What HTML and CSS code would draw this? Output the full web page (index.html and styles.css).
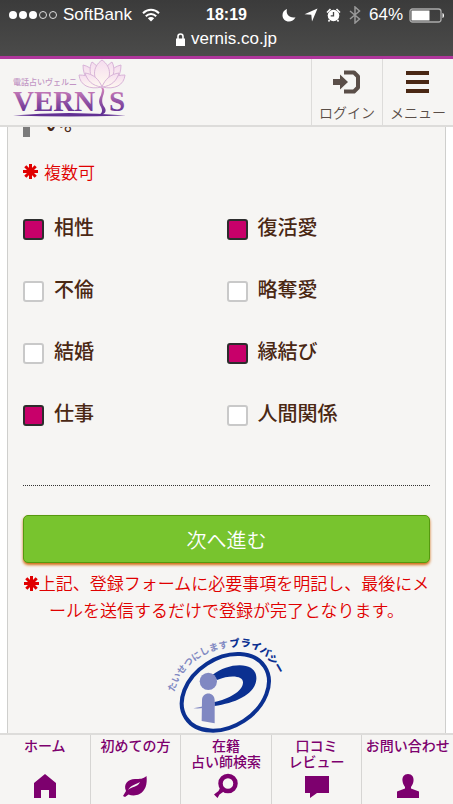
FILE: index.html
```html
<!DOCTYPE html>
<html lang="ja">
<head>
<meta charset="utf-8">
<meta name="viewport" content="width=device-width, initial-scale=1">
<title>VERNIS</title>
<link rel="stylesheet" href="styles.css">
</head>
<body>
<div class="browser-bar">
  <div class="status">
    <div class="status-left">
      <svg width="49" height="10" viewBox="0 0 49 10" fill="#fff"><circle cx="5" cy="5" r="4"/><circle cx="15" cy="5" r="4"/><circle cx="25" cy="5" r="4"/><g fill="none" stroke="#ddd"><circle cx="35" cy="5" r="3.5"/><circle cx="45" cy="5" r="3.5"/></g></svg>
      <span>SoftBank</span>
      <svg class="wifi" width="18" height="14" viewBox="0 0 18 14" fill="none" stroke="#fff" stroke-width="2"><path d="M1 5.2C5.6.6 12.4.6 17 5.2M3.8 8.200c3-3 7.400-3 10.400 0"/><path d="M9 13.500 5.800 10.300c1.800-1.700 4.600-1.700 6.400 0z" fill="#fff" stroke="none"/></svg>
    </div>
    <span class="time">18:19</span>
    <div class="status-right">
      <svg width="14" height="14" viewBox="0 0 14 14"><path d="M5 1C3.500 6 7.500 10.500 13.500 9.300 12 12.300 9.600 13.500 7 13.500 3.200 13.500.5 10.700.5 7.200.5 4.200 2.300 1.800 5 1z" fill="#fff"/></svg>
      <svg width="14" height="14" viewBox="0 0 14 14"><path d="M13.500.5 8 13.500 7.300 6.800.5 6.300z" fill="#fff"/></svg>
      <svg width="15" height="14" viewBox="0 0 15 14"><circle cx="7.500" cy="7.500" r="5.800" fill="#fff"/><path d="M1 4.500 4.500 1M14 4.500 10.500 1M3.500 12 2.500 13.500M11.500 12l1 1.500" stroke="#fff" stroke-width="1.600"/><path d="M7.500 4v3.800H4.700" fill="none" stroke="#444" stroke-width="1.300"/></svg>
      <svg width="12" height="18" viewBox="0 0 12 18"><path d="M1 5l9.500 8L6 17V1l4.500 4L1 13" fill="none" stroke="#999" stroke-width="1.500"/></svg>
      <span>64%</span>
      <svg width="36" height="15" viewBox="0 0 36 15"><rect x="1" y="1" width="31" height="13" rx="2.500" fill="none" stroke="#aaa" stroke-width="1.300"/><path d="M2.500 2.500h18v10h-18z" fill="#fff"/><path d="M33.500 5c2 .5 2 4.500 0 5z" fill="#fff"/></svg>
    </div>
  </div>
  <div class="address">
    <svg width="9" height="13" viewBox="0 0 9 13"><path d="M0 5.500h9V13H0z" fill="#fff"/><path d="M2 6V3.500c0-3.300 5-3.300 5 0V6" fill="none" stroke="#fff" stroke-width="1.600"/></svg>
    <span>vernis.co.jp</span>
  </div>
</div>

<header class="site-header">
  <a class="logo" href="#" aria-label="VERNIS">
    <svg width="116" height="60" viewBox="0 0 116 60">
      <defs>
        <linearGradient id="brand" x1="0" y1="30" x2="0" y2="54" gradientUnits="userSpaceOnUse"><stop offset="0" stop-color="#cf82bb"/><stop offset=".5" stop-color="#9656a6"/><stop offset="1" stop-color="#613093"/></linearGradient>
        <linearGradient id="petal" x1="0" y1="0" x2="0" y2="1"><stop offset="0" stop-color="#f5dcef"/><stop offset="1" stop-color="#fffaf0"/></linearGradient>
      </defs>
      <text class="logo-kana" x="0" y="26">電話占いヴェルニ</text>
      <g fill="url(#brand)">
        <text class="logo-name" x="0" y="52">VERN</text>
        <text class="logo-name" x="96" y="52">S</text>
        <path d="M87 28c5 0 5 4 3 9-2 6 0 9 2 12 2 4-1 7-6 7 3-2 4-4 2-8-3-5-2-8 0-12 1-4 2-6-1-8z"/>
        <path d="M0 56.500Q55 51.500 113 56.500 55 58.500 0 56.500z"/>
      </g>
      <g fill="url(#petal)" stroke="#d8b4d8" stroke-width="1">
        <path d="M87 28C76 27 70 17 70 6c9 2 16 10 18 20zM91 28c11-1 17-11 17-22-9 2-16 10-18 20z"/>
        <path d="M88 28C77 23 75 10 79 3c7 4 11 14 10 24zM90 28c11-5 13-18 9-25-7 4-11 14-10 24z"/>
        <path d="M89 28C79 20 79 8 89 1c10 7 10 19 0 27z"/>
        <path d="M89 28C76 31 67 26 66 16c10 0 19 4 23 12zM89 28c13 3 22-2 23-12-10 0-19 4-23 12z"/>
        <path d="M89 28c-10-1-15-7-17-14 8 1 14 6 17 14zM89 28c10-1 15-7 17-14-8 1-14 6-17 14z"/>
      </g>
    </svg>
  </a>
  <a class="header-link" href="#">
    <svg width="30" height="24" viewBox="0 0 30 24"><path d="M12 2.500h10l4 4v11l-4 4H12" fill="none" stroke="#5a4e48" stroke-width="4" stroke-linejoin="round"/><path d="M1 9h7V4.500l8 7.500-8 7.500V15H1z" fill="#5a4e48"/></svg>
    <span>ログイン</span>
  </a>
  <button class="header-link" type="button">
    <svg width="24" height="24" viewBox="0 0 24 24" fill="#4a2814"><path d="M0 1h23v4H0zM0 10h23v4H0zM0 19h23v4H0z"/></svg>
    <span>メニュー</span>
  </button>
</header>

<main class="page">
  <form class="panel">
    <h2 class="question">い。</h2>
    <p class="hint"><svg class="mark" width="15" height="15" viewBox="0 0 15 15"><path d="M7.500 0v15M0 7.500h15M2.300 2.300l10.400 10.400M12.700 2.300 2.300 12.700"/></svg>複数可</p>
    <div class="choices">
      <label class="choice"><input type="checkbox" checked><span>相性</span></label>
      <label class="choice"><input type="checkbox" checked><span>復活愛</span></label>
      <label class="choice"><input type="checkbox"><span>不倫</span></label>
      <label class="choice"><input type="checkbox"><span>略奪愛</span></label>
      <label class="choice"><input type="checkbox"><span>結婚</span></label>
      <label class="choice"><input type="checkbox" checked><span>縁結び</span></label>
      <label class="choice"><input type="checkbox" checked><span>仕事</span></label>
      <label class="choice"><input type="checkbox"><span>人間関係</span></label>
    </div>
    <hr class="divider">
    <button class="submit" type="button">次へ進む</button>
    <p class="note"><svg class="mark" width="15" height="15" viewBox="0 0 15 15"><path d="M7.500 0v15M0 7.500h15M2.300 2.300l10.400 10.400M12.700 2.300 2.300 12.700"/></svg>上記、登録フォームに必要事項を明記し、最後にメールを送信するだけで登録が完了となります。</p>
    <svg class="privacy" width="116" height="104" viewBox="40 20 348 312">
      <defs>
        <path id="arc-a" d="M56 204C72 136 138 76 222 70"/>
        <path id="arc-b" d="M224 70C290 54 342 88 376 168"/>
      </defs>
      <ellipse cx="209" cy="204" rx="141" ry="102" transform="rotate(-33 209 204)" fill="none" stroke="#0b3091" stroke-width="12"/>
      <path d="M170 152C195 133 225 123 252 123c34 0 52 17 50 42-3 45-62 71-126 80v-12c42-9 85-32 86-58 1-20-36-25-78-8z" fill="#0b3091"/>
      <path d="M113 252q33-4 64-16v10q-32 8-64 6z" fill="#8088c2"/>
      <circle cx="158" cy="171" r="26" fill="#8088c2"/>
      <path d="M139 228c0-27 38-27 38 0v69l-39-7z" fill="#8088c2"/>
      <text class="arc-light"><textPath href="#arc-a">たいせつにします</textPath></text>
      <text class="arc-dark"><textPath href="#arc-b">プライバシー</textPath></text>
    </svg>
  </form>
</main>

<nav class="tabs">
  <a href="#"><span>ホーム</span><svg width="26" height="26" viewBox="0 0 26 26"><path d="M13 1l11 9v15h-7v-8H9v8H2V10z"/></svg></a>
  <a href="#"><span>初めての方</span><svg width="26" height="26" viewBox="0 0 26 26"><path d="M24.500 3c1 8-1 15-7 18-4 2-8 1.500-11 .5L3 24l-2-1 3-5C1 11 6 6 13 6c5 0 8 0 11.500-3z"/><path d="M6 17c3-5 7-5 12-8-3 6-8 4-12 8z" fill="#f6f5f3"/></svg></a>
  <a href="#"><span>在籍<br>占い師検索</span><svg width="26" height="26" viewBox="0 0 26 26"><circle cx="15" cy="10.500" r="7.500" fill="none" stroke="#7d006e" stroke-width="4.500"/><path d="M7.500 14l4 4-5 3.500L4.500 25 1 21.500 5.500 18z"/></svg></a>
  <a href="#"><span>口コミ<br>レビュー</span><svg width="26" height="26" viewBox="0 0 26 26"><path d="M1 3h24v17H13l-7 5v-5H1z"/></svg></a>
  <a href="#"><span>お問い合わせ</span><svg width="26" height="26" viewBox="0 0 26 26"><path d="M13 1c4 0 6 3 5.500 7-.4 3-1.500 4.500-2.500 6v1.500l8 3V25H2v-6.500l8-3V14C9 12.500 7.900 11 7.500 8 7 4 9 1 13 1z"/></svg></a>
</nav>
</body>
</html>
```

FILE: styles.css
```css
* {
  box-sizing: border-box;
}

body {
  margin: 0;
  height: 100vh;
  display: flex;
  flex-direction: column;
  background: #fff;
  color: #4a2814;
  font-family: "Noto Sans CJK JP", sans-serif;
}

svg {
  flex: none;
}

a {
  color: inherit;
  text-decoration: none;
}

/* Browser chrome */
.browser-bar {
  flex: none;
  padding: 5px 8px 6px;
  border-bottom: 3px solid #b0369c;
  background: linear-gradient(#3b3b3b, #4b4b4a);
  color: #fff;
  font: 17px/20px "Liberation Sans", sans-serif;
}

.status {
  display: grid;
  grid-template-columns: 1fr auto 1fr;
  align-items: center;
  height: 20px;
}

.status-left {
  display: flex;
  align-items: center;
  gap: 6px;
}

.wifi {
  margin-left: 4px;
}

.time {
  font-size: 16px;
  font-weight: bold;
}

.status-right {
  display: flex;
  align-items: center;
  justify-content: flex-end;
  gap: 8px;
}

.status-right span {
  margin-right: -2px;
}

.address {
  display: flex;
  align-items: center;
  justify-content: center;
  gap: 6px;
  margin-top: 4px;
  padding-bottom: 1px;
}

/* Site header */
.site-header {
  flex: none;
  display: flex;
  height: 68px;
  border-bottom: 2px solid #dddcda;
  background: #f6f5f3;
}

.logo {
  flex: 1;
  padding-left: 13px;
}

.logo svg {
  display: block;
}

.logo-kana {
  fill: #c295c4;
  font-size: 8px;
  font-weight: 500;
}

.logo-name {
  font: bold 29px "Liberation Serif", serif;
}

.header-link {
  display: flex;
  flex-direction: column;
  align-items: center;
  width: 71px;
  padding: 11px 0 0;
  border: 0;
  border-left: 1px solid #dddcda;
  background: none;
  color: #5a4e48;
  font-family: inherit;
  font-size: 14px;
  font-weight: 350;
  line-height: 20px;
}

.header-link span {
  margin-top: 8px;
}

/* Form */
.page {
  flex: 1;
  min-height: 0;
  overflow: hidden;
}

.panel {
  min-height: 100%;
  margin: 0 7px;
  padding: 0 15px;
  border: solid #cfcfcd;
  border-width: 0 1px;
  background: #f6f5f3;
}

.question {
  margin: -18px 0 0;
  padding-left: 14px;
  border-left: 7px solid #7b7b7b;
  font-size: 20px;
  font-weight: 500;
  line-height: 28px;
}

.hint,
.note {
  margin: 0;
  color: #e00000;
  font-size: 17px;
  font-weight: 350;
  line-height: 27px;
}

.hint {
  display: flex;
  align-items: center;
  gap: 6px;
  margin: 21px 0 31px;
}

.mark {
  vertical-align: -1px;
  fill: none;
  stroke: #e00000;
  stroke-width: 3;
}

.choices {
  display: grid;
  grid-template-columns: 1fr 1fr;
  row-gap: 38px;
}

.choice {
  display: flex;
  gap: 10px;
  height: 24px;
  font-size: 20px;
  font-weight: 500;
  line-height: 22px;
}

.choice input {
  appearance: none;
  align-self: flex-end;
  width: 21px;
  height: 21px;
  margin: 0;
  border: 2px solid #c9c9c9;
  border-radius: 3px;
  background: #fff;
}

.choice input:checked {
  border-color: #2d2d2d;
  background: #c8006a;
}

.divider {
  margin: 59px 0 29px;
  border: 0;
  border-top: 1px dotted #333;
}

.submit {
  display: block;
  width: 100%;
  height: 48px;
  padding: 0;
  border: 1px solid #55990f;
  border-radius: 5px;
  background: #78c42e;
  box-shadow: 0 2px 3px #d06a10;
  color: #fff;
  font-family: inherit;
  font-size: 20px;
  font-weight: 350;
}

.note {
  margin-top: 6px;
  line-break: loose;
  text-align: center;
}

.privacy {
  display: block;
  margin: 8px auto 0;
  overflow: visible;
}

.arc-light {
  fill: #8088c2;
  font-size: 28px;
  font-weight: 700;
}

.arc-dark {
  fill: #0b3091;
  font-size: 30px;
  font-weight: 900;
}

/* Bottom tabs */
.tabs {
  flex: none;
  display: grid;
  grid-template-columns: repeat(5, 1fr);
  height: 71px;
  border-top: 2px solid #dddcda;
  background: #f6f5f3;
  color: #7d006e;
  font-size: 14px;
  font-weight: 500;
  line-height: 16px;
  text-align: center;
}

.tabs a {
  display: flex;
  flex-direction: column;
  align-items: center;
  justify-content: space-between;
  padding: 2px 0 5px;
  border-right: 1px solid #d6d5d3;
  white-space: nowrap;
}

.tabs a:last-child {
  border-right: 0;
}

.tabs svg {
  fill: #7d006e;
}
```
